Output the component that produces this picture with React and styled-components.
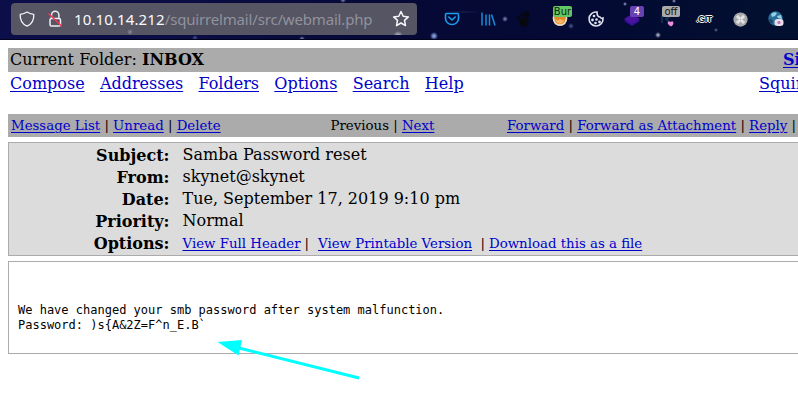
import React from "react";
import styled, { createGlobalStyle } from "styled-components";

const GlobalStyle = createGlobalStyle`
  body { margin: 0; background: #fff; color: #000; overflow: hidden; }
  * { box-sizing: border-box; }
`;

const Screen = styled.div`
  position: relative;
  width: 798px;
  height: 415px;
  overflow: hidden;
  font: 16px/22px "DejaVu Serif", serif;
`;

const BrowserBar = styled.header`
  display: flex;
  align-items: flex-start;
  height: 40px;
  padding-left: 11px;
  border-bottom: 1px solid #02041c;
  background:
    radial-gradient(circle at 434px 36px, #a9b8e8 0, #5668a8 2px, transparent 4px),
    radial-gradient(circle at 658px 35px, #c9cbe0 0, transparent 3px),
    radial-gradient(circle at 505px 19px, #8290c0 0, transparent 3px),
    radial-gradient(circle at 571px 26px, #4d5b90 0, transparent 3px),
    radial-gradient(circle at 625px 4px, #a6b0d8 0, transparent 2px),
    radial-gradient(circle at 674px 1px, #a6b0d8 0, transparent 2px),
    radial-gradient(circle at 716px 30px, #66719a 0, transparent 2px),
    radial-gradient(circle at 302px 39px, #8290c0 0, transparent 3px),
    radial-gradient(circle at 343px 0px, #8290c0 0, transparent 3px),
    radial-gradient(circle at 195px 38px, #46539c 0, transparent 3px),
    radial-gradient(ellipse at 463px 12px, #1b2454 0, transparent 18px),
    linear-gradient(90deg, #0b0e49 0, #0a0c42 200px, #060935 420px, #030a33 600px, #02102f 798px);
`;

const AddressField = styled.div`
  display: flex;
  align-items: center;
  width: 406px;
  height: 32px;
  margin-top: 3px;
  padding-left: 8px;
  border-radius: 4px;
  background:
    radial-gradient(circle at 387px 33px, #c4c8e0 0, transparent 5px),
    radial-gradient(circle at 119px 29px, #8c8ea5 0, transparent 3px),
    #555563;
`;

const Glyph = styled.svg`
  display: block;
  flex: none;
  width: ${(p) => p.$w || 18}px;
  height: ${(p) => p.$h || 18}px;
  margin-left: ${(p) => p.$gap || 0}px;
  overflow: visible;
`;

const Url = styled.div`
  flex: none;
  width: 318px;
  margin: 0 0 0 11px;
  white-space: nowrap;
  font: 15px/22px "Noto Sans", sans-serif;
  letter-spacing: -0.17px;
  color: #92929d;
`;

const Host = styled.span`
  color: #fafafc;
  letter-spacing: 0.12px;
`;

const Extensions = styled.div`
  display: grid;
  grid-template-columns: repeat(10, 36px);
  margin-left: 17px;
`;

const Extension = styled.div`
  position: relative;
  display: flex;
  justify-content: center;
  align-items: center;
  height: 38px;
`;

const Badge = styled.span`
  position: absolute;
  top: 6px;
  left: ${(p) => p.$left}px;
  width: ${(p) => p.$w}px;
  height: 11px;
  border-radius: 2px;
  text-align: center;
  white-space: nowrap;
  font: 10px/11px "DejaVu Sans", sans-serif;
  color: ${(p) => p.$ink};
  background: ${(p) => p.$fill};
`;

const GitLabel = styled.span`
  font: bold 9px/12px "Liberation Sans Narrow", "Liberation Sans", sans-serif;
  letter-spacing: -0.5px;
  color: #101014;
  text-shadow: 1px 0 #f2f2f2, -1px 0 #f2f2f2, 0 1px #f2f2f2, 0 -1px #f2f2f2;
`;

const Mail = styled.main`
  display: flex;
  flex-direction: column;
  width: 860px;
  padding: 8px 0 0 8px;
  white-space: nowrap;
`;

const Link = styled.a`
  color: #0000cc;
  text-decoration: underline;
  text-decoration-thickness: 1px;
  text-underline-offset: 2px;
`;

const FolderBar = styled.div`
  display: grid;
  grid-template-columns: 773px auto;
  height: 24px;
  padding: 1px 0 0 2px;
  background: #ababab;
`;

const Menu = styled.nav`
  display: grid;
  grid-template-columns: 749px auto;
  height: 42px;
  padding: 1px 0 0 2px;
`;

const MenuLinks = styled.div`
  display: flex;
  gap: 15.3px;
`;

const Toolbar = styled.div`
  display: grid;
  grid-template-columns: 319.5px 176.5px auto;
  height: 23px;
  padding: 1px 0 0 3px;
  background: #ababab;
  font-size: 13.333px;
`;

const Details = styled.dl`
  display: grid;
  grid-template-columns: 160.5px auto;
  column-gap: 13px;
  grid-auto-rows: 22px;
  height: 114px;
  margin: 5px 0 0;
  padding-top: 1px;
  border: 1px solid #ababab;
  background: #dcdcdc;
`;

const Label = styled.dt`
  padding-top: 1px;
  text-align: right;
  font-weight: bold;
`;

const Value = styled.dd`
  margin: 0;
`;

const FileOptions = styled(Value)`
  display: flex;
  padding-top: 1px;
  font-size: 13.333px;
`;

const Divider = styled.span`
  margin: 0 ${(p) => p.$after}px 0 ${(p) => p.$before}px;
`;

const Message = styled.pre`
  height: 93px;
  margin: 5px 0 0;
  padding: 41px 0 0 9px;
  border: 1px solid #ababab;
  font: 12px/15px "DejaVu Sans Mono", monospace;
`;

const Pointer = styled.svg`
  position: absolute;
  left: 210px;
  top: 335px;
  width: 160px;
  height: 50px;
`;

const menuItems = ["Compose", "Addresses", "Folders", "Options", "Search", "Help"];

const Go = ({ children }) => <Link href="#">{children}</Link>;

const Shield = () => (
  <Glyph viewBox="0 0 18 18" $w={16} $h={18} fill="none" stroke="#f4f4f7" strokeWidth="1.5" strokeLinejoin="round">
    <path d="M9 1.2C6.5 3 4 3.5 1.4 3.8 1 10 3 14.5 9 17 15 14.5 17 10 16.6 3.8 14 3.5 11.5 3 9 1.2Z" />
  </Glyph>
);

const BrokenLock = () => (
  <Glyph viewBox="0 0 16 18" $w={16} $h={18} $gap={12} fill="none" stroke="#ededf2" strokeWidth="1.5">
    <path d="M4.5 8V5a3.7 3.7 0 0 1 7.4 0v3" />
    <rect x="3" y="8.5" width="10.5" height="7.5" rx="1.5" />
    <path d="M1.5 3.5 15 16.5" stroke="#ff304f" />
  </Glyph>
);

const Star = () => (
  <Glyph viewBox="0 0 18 18" $w={18} $h={18} fill="none" stroke="#f6f6f9" strokeWidth="1.5" strokeLinejoin="round">
    <path d="m9 1.5 2.2 4.8 5.2.6-3.9 3.5 1 5.2L9 13l-4.5 2.6 1-5.2L1.6 6.9l5.2-.6Z" />
  </Glyph>
);

const Pocket = () => (
  <Glyph viewBox="0 0 16 16" $w={16} $h={16} fill="none" stroke="#1a9cf0" strokeWidth="1.6" strokeLinecap="round" strokeLinejoin="round">
    <path d="M2.5 2.5h11q1 0 1 1v4a6.5 6 0 0 1-13 0v-4q0-1 1-1Z" />
    <path d="m4.8 6 3.2 3 3.2-3" />
  </Glyph>
);

const Library = () => (
  <Glyph viewBox="0 0 16 16" $w={16} $h={16} fill="none" stroke="#168cda" strokeWidth="1.5">
    <path d="M2 1.5v13M6 3.5v11M9.5 3.5v11M11.5 3.5l3.5 11" />
  </Glyph>
);

const Foot = () => (
  <Glyph viewBox="0 0 16 16" $w={16} $h={16} fill="#08070c">
    <ellipse cx="11" cy="3" rx="2.2" ry="3" />
    <ellipse cx="7.3" cy="3.5" rx="1.3" ry="1.9" />
    <ellipse cx="4.6" cy="5" rx="1.2" ry="1.6" />
    <ellipse cx="2.8" cy="7" rx="1" ry="1.4" />
    <path d="M4 9c1-3 9-3.5 9-.5 0 2-3 1.5-3 3s1-.5 2 1c0 2-2.5 3.5-5 3-3-.7-4-4-3-6.5Z" />
  </Glyph>
);

const Fox = () => (
  <Glyph viewBox="0 0 16 16" $w={16} $h={16}>
    <circle cx="8" cy="7.5" r="7.3" fill="#e8dcc8" />
    <path d="M2 5q6-3 12 0l-1 7q-5 4-10 0Z" fill="#e68626" />
    <path d="m3 8 3 1.5L8 8l3 1.5L13 8l-2 3.5-3 1.5-3-1.5Z" fill="#f5b865" />
    <path d="M2 9q1 5 6 5t6-5" fill="none" stroke="#e8dcc8" strokeWidth="1.3" />
  </Glyph>
);

const Cookie = () => (
  <Glyph viewBox="0 0 16 16" $w={16} $h={16} fill="none" stroke="#dfe3ee" strokeWidth="1.6">
    <path d="M9 1a7 7 0 1 0 6 6q-2 1-3-1-3 0-3-5Z" />
    <g fill="#dfe3ee" stroke="none">
      <circle cx="6" cy="5" r="1.3" /><circle cx="4.5" cy="9" r="1.4" />
      <circle cx="8.5" cy="8.5" r="1.3" /><circle cx="7.5" cy="12" r="1.3" />
      <circle cx="11.5" cy="11" r="1.4" />
    </g>
  </Glyph>
);

const Layers = () => (
  <Glyph viewBox="0 0 16 16" $w={16} $h={16}>
    <path d="m0 10 8-5 8 5-8 5Z" fill="#32109a" />
    <path d="m0 8 8-5 8 5-8 5Z" fill="#4a149e" />
  </Glyph>
);

const Cursor = () => (
  <Glyph viewBox="0 0 16 16" $w={16} $h={16}>
    <path d="M2 12V5l7 1-3 2 3 3" fill="none" stroke="#143458" strokeWidth="1.6" />
    <path d="M7.5 12q1-3 3-1 2.5-2 3 1 0 2-2.5 3.500-2.5-1-3.5-3.500Z" fill="#ed8edc" />
  </Glyph>
);

const Command = () => (
  <Glyph viewBox="0 0 16 16" $w={15} $h={15}>
    <circle cx="8" cy="8" r="7.6" fill="#a8a8aa" />
    <path d="M6.5 6.5h3v3h-3ZM6.5 6.5h-1a1.2 1.2 0 1 1 1-1Zm3 0v-1a1.2 1.2 0 1 1 1 1Zm0 3h1a1.2 1.2 0 1 1-1 1Zm-3 0v1a1.2 1.2 0 1 1-1-1Z" fill="none" stroke="#fff" />
  </Glyph>
);

const Globe = () => (
  <Glyph viewBox="0 0 16 16" $w={16} $h={16}>
    <circle cx="7.5" cy="7.5" r="7.2" fill="#286e98" />
    <path d="M3 3q3-3 6-1L7 5 4 6Zm6 2 4-1 1 4-4-1Z" fill="#94d1e2" />
    <path d="M1 8q3 0 4 2l-1 3Q1 11 1 8Z" fill="#184362" />
    <rect x="6.5" y="8" width="9" height="7" rx="3" fill="#e9ddea" />
    <circle cx="11" cy="11.5" r="1.6" fill="#b779b4" />
  </Glyph>
);

export default function App() {
  return (
    <Screen>
      <GlobalStyle />
      <BrowserBar>
        <AddressField>
          <Shield />
          <BrokenLock />
          <Url><Host>10.10.14.212</Host>/squirrelmail/src/webmail.php</Url>
          <Star />
        </AddressField>
        <Extensions>
          <Extension><Pocket /></Extension>
          <Extension><Library /></Extension>
          <Extension><Foot /></Extension>
          <Extension><Fox /><Badge $left={11} $w={19} $fill="#62c864" $ink="#102611">Bur</Badge></Extension>
          <Extension><Cookie /></Extension>
          <Extension><Layers /><Badge $left={16} $w={14} $fill="#6841b3" $ink="#fff">4</Badge></Extension>
          <Extension><Cursor /><Badge $left={12} $w={18} $fill="#aaa" $ink="#111">off</Badge></Extension>
          <Extension><GitLabel>.GIT</GitLabel></Extension>
          <Extension><Command /></Extension>
          <Extension><Globe /></Extension>
        </Extensions>
      </BrowserBar>
      <Mail>
        <FolderBar>
          <span>Current Folder: <b>INBOX</b></span>
          <b><Go>Sign Out</Go></b>
        </FolderBar>
        <Menu>
          <MenuLinks>{menuItems.map((item) => <Go key={item}>{item}</Go>)}</MenuLinks>
          <Go>SquirrelMail</Go>
        </Menu>
        <Toolbar>
          <span><Go>Message List</Go> | <Go>Unread</Go> | <Go>Delete</Go></span>
          <span>Previous | <Go>Next</Go></span>
          <span><Go>Forward</Go> | <Go>Forward as Attachment</Go> | <Go>Reply</Go> | <Go>Reply All</Go></span>
        </Toolbar>
        <Details>
          <Label>Subject:</Label><Value>Samba Password reset</Value>
          <Label>From:</Label><Value>skynet@skynet</Value>
          <Label>Date:</Label><Value>Tue, September 17, 2019 9:10 pm</Value>
          <Label>Priority:</Label><Value>Normal</Value>
          <Label>Options:</Label>
          <FileOptions>
            <Go>View Full Header</Go><Divider $before={4} $after={9}>|</Divider>
            <Go>View Printable Version</Go><Divider $before={8.5} $after={4}>|</Divider>
            <Go>Download this as a file</Go>
          </FileOptions>
        </Details>
        <Message>{"We have changed your smb password after system malfunction.\nPassword: )s{A&2Z=F^n_E.B`"}</Message>
      </Mail>
      <Pointer viewBox="0 0 160 50">
        <path d="M29 13 149 43" stroke="#00ffff" strokeWidth="3" />
        <path d="m7.5 7 24.5-2-3.5 15.5Z" fill="#00ffff" />
      </Pointer>
    </Screen>
  );
}
